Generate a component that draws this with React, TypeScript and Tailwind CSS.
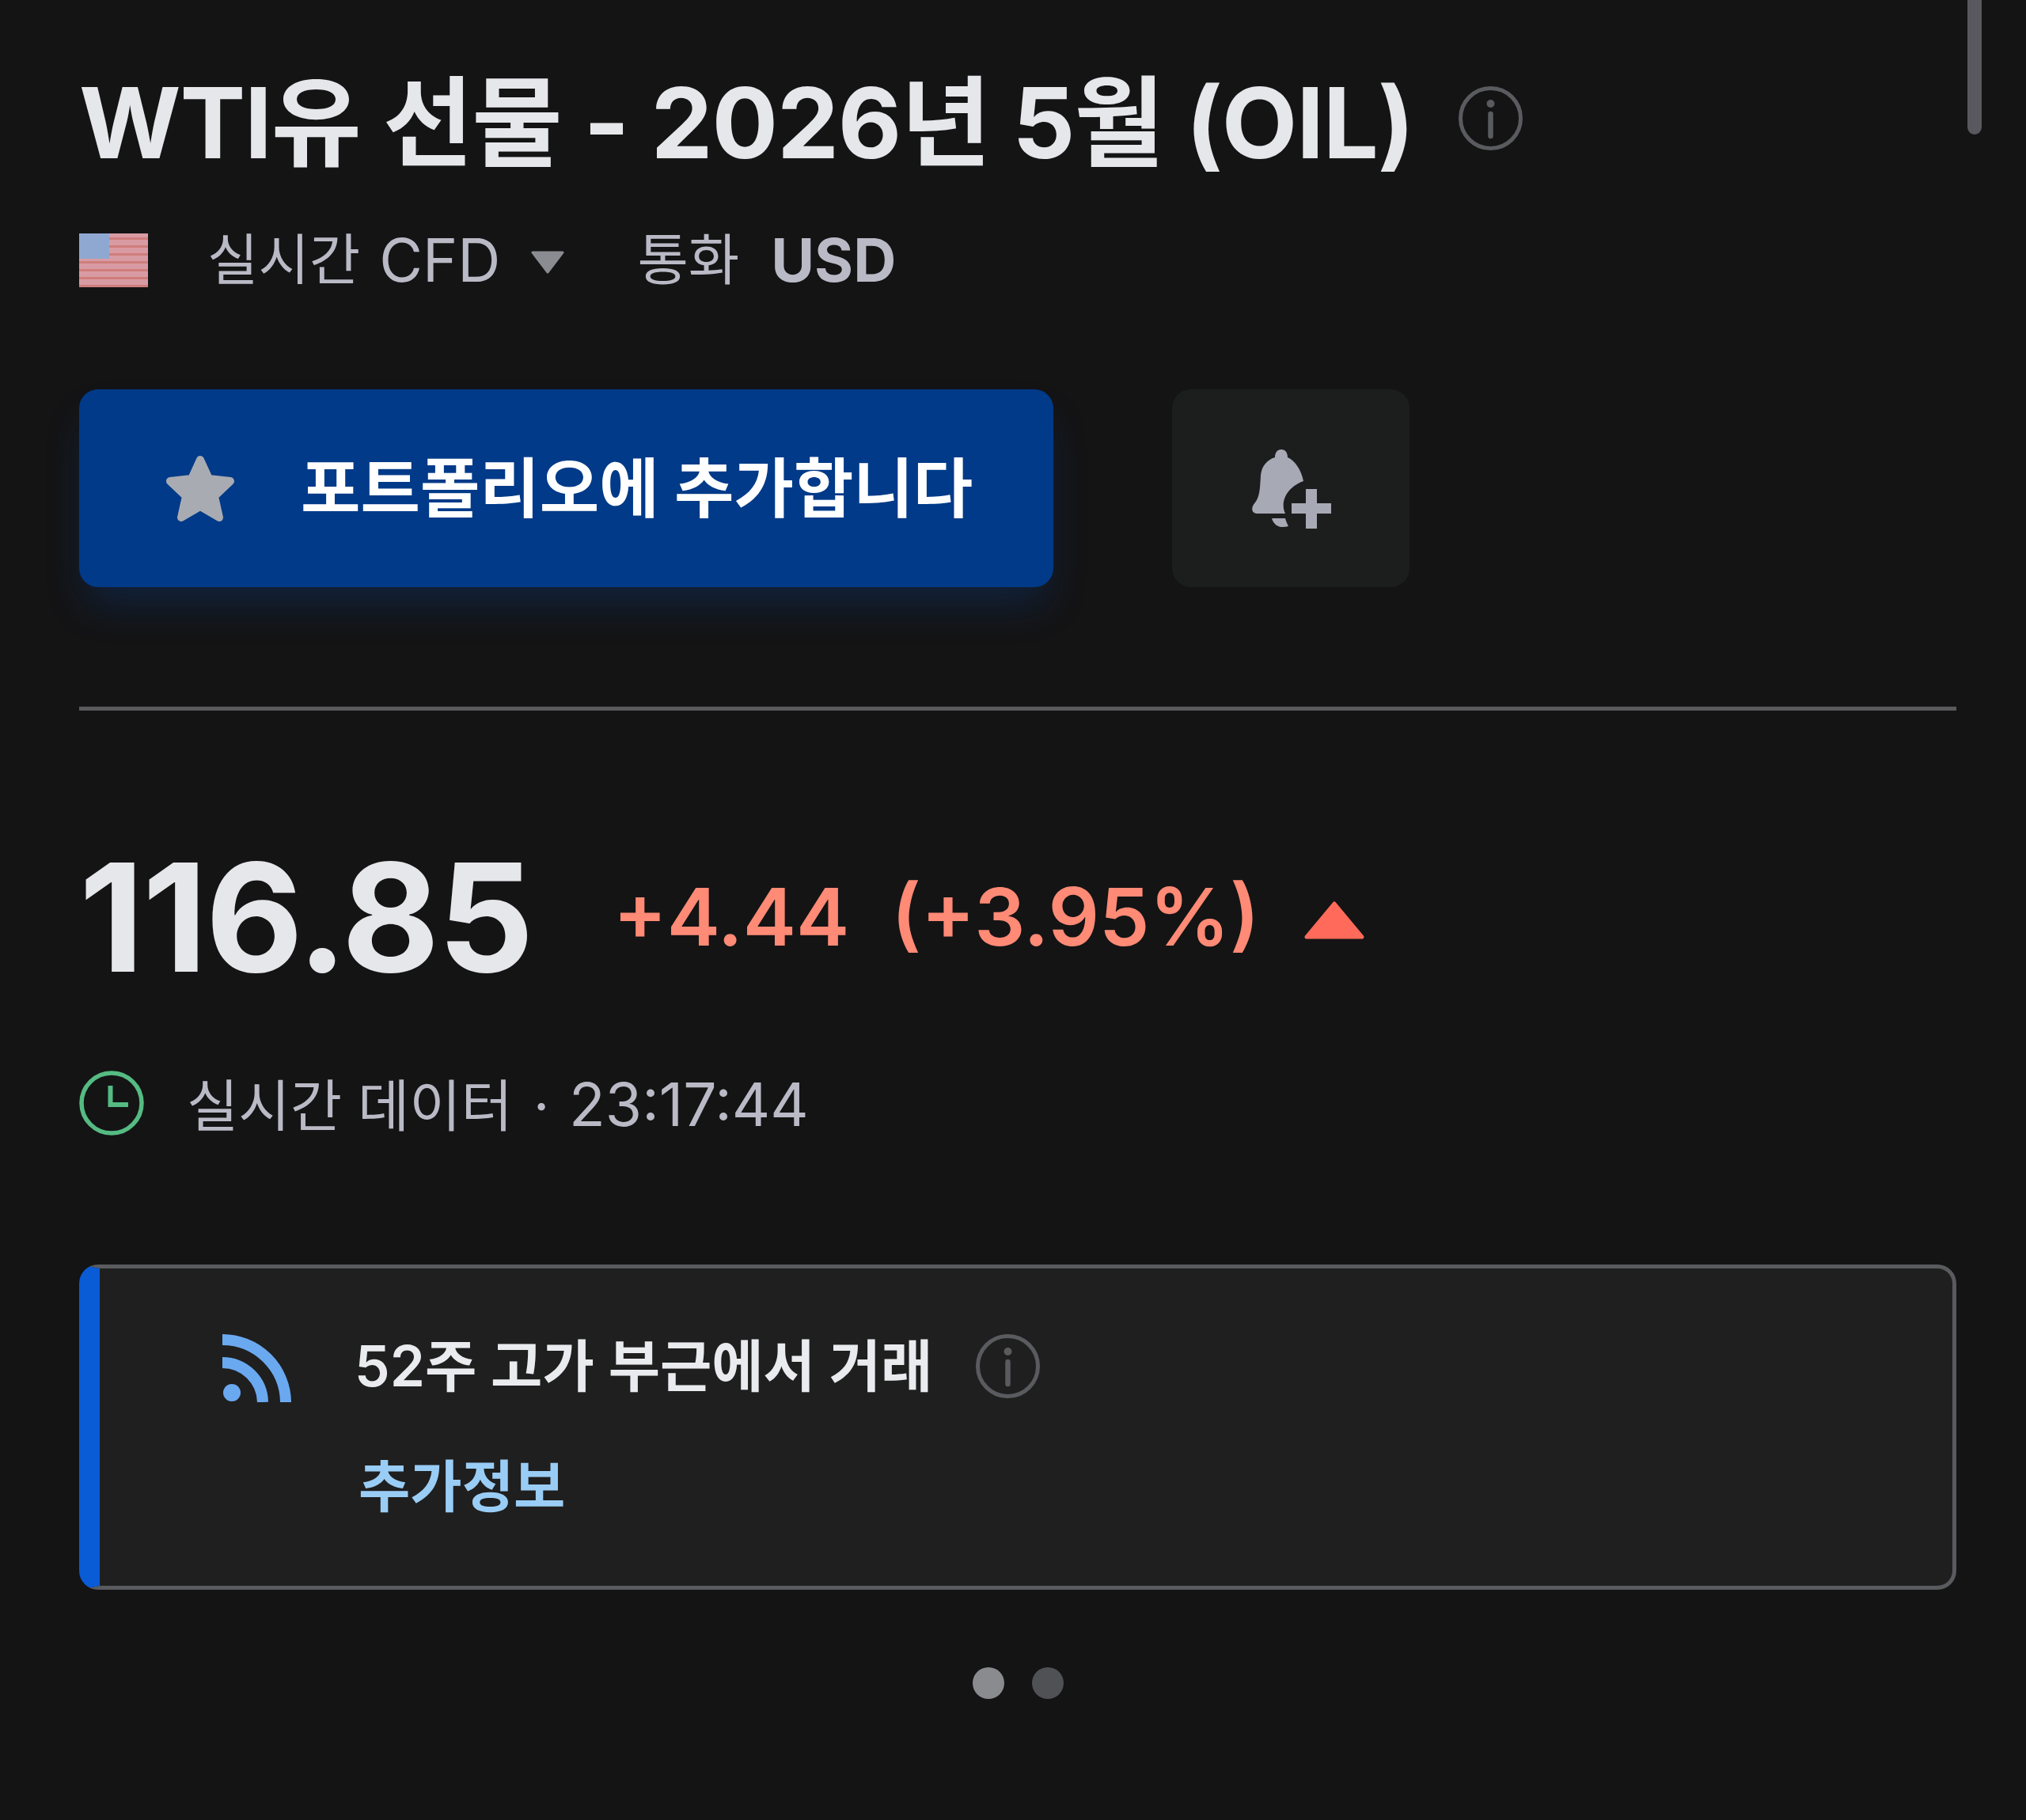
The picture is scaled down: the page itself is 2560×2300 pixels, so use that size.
const InfoIcon = ({ className }: { className: string }) => (
  <svg viewBox="0 0 81 81" className={className} fill="none">
    <circle cx="40.5" cy="40.5" r="38" stroke="#5a5b5f" strokeWidth="5" />
    <circle cx="40.5" cy="22" r="5" fill="#5a5b5f" />
    <path d="M40.5 35v28" stroke="#5a5b5f" strokeWidth="6.5" strokeLinecap="round" />
  </svg>
);

const UsFlag = () => (
  <svg viewBox="0 0 87 68" className="h-[68px] w-[87px] shrink-0">
    <rect width="87" height="68" fill="#d99ba3" />
    {[5, 15, 25, 35, 45, 55, 65].map((y) => (
      <rect key={y} y={y} width="87" height="3" fill="#cf7d7c" />
    ))}
    <rect width="38" height="32" fill="#8ea8d2" />
  </svg>
);

const StarIcon = () => (
  <svg viewBox="0 0 90 87" className="h-[87px] w-[90px] shrink-0">
    <polygon
      points="45,7 56,31 83,34 63,53 69,80 45,66 21,80 27,53 7,34 34,31"
      fill="#a9abb2"
      stroke="#a9abb2"
      strokeWidth="10"
      strokeLinejoin="round"
    />
  </svg>
);

const BellPlusIcon = () => (
  <svg viewBox="0 0 101 101" className="h-[101px] w-[101px]" fill="#a7a9b4">
    <path d="M38 1C33 1 30 5 30 11C20 14 13 22 12 34C11 50 11 60 5 68C0 73-1 82 8 82L43 82C37 70 42 50 66 41C63 26 55 15 46 11C46 5 43 1 38 1Z" />
    <path d="M26 88L43 88C44 92 46 96 47 98C37 101 29 98 26 88Z" />
    <path d="M69 51H83V69H101V82H83V101H69V82H51V69H69Z" />
  </svg>
);

const ClockIcon = () => (
  <svg viewBox="0 0 82 82" className="h-[82px] w-[82px] shrink-0" fill="none" stroke="#55bb82">
    <circle cx="41" cy="41" r="38" strokeWidth="5.5" />
    <path d="M39.5 19V43H62" strokeWidth="6" />
  </svg>
);

const FeedIcon = () => (
  <svg viewBox="0 0 87 86" className="h-[86px] w-[87px] shrink-0" fill="none" stroke="#6aa9f0">
    <circle cx="12" cy="74" r="11" fill="#6aa9f0" stroke="none" />
    <path d="M0 7A80 80 0 0 1 80 86" strokeWidth="14" />
    <path d="M0 36A51 51 0 0 1 51 86" strokeWidth="14" />
  </svg>
);

export default function App() {
  return (
    <div className="relative h-[2300px] w-[2560px] overflow-hidden bg-[#141415] pl-[100px] pr-[88px] pt-[80px] font-[Inter,'Noto_Sans_CJK_KR',sans-serif]">
      {/* scrollbar */}
      <div className="absolute right-[56px] top-0 h-[170px] w-[18px] rounded-b-full bg-[#58585e]" />

      {/* Title */}
      <div className="flex items-center">
        <h1 className="text-[124px] font-bold leading-[150px] tracking-[-1.2px] text-[#e6e7ea]">
          WTI유 선물 - 2026년 5월 (OIL)
        </h1>
        <InfoIcon className="mb-[12px] ml-[57px] h-[81px] w-[81px] shrink-0" />
      </div>

      {/* Market row */}
      <div className="mt-[59px] flex h-[80px] items-center leading-[80px] text-[#b9bac5]">
        <UsFlag />
        <span className="ml-[75px] text-[70px]">실시간</span>
        <span className="ml-[24px] text-[75px]">CFD</span>
        <svg viewBox="0 0 44 30" className="ml-[38px] mt-[4px] h-[30px] w-[44px]">
          <path d="M3 3H41L22 28Z" fill="#8b8c91" stroke="#8b8c91" strokeWidth="3" strokeLinejoin="round" />
        </svg>
        <span className="ml-[91px] text-[70px]">통화</span>
        <span className="ml-[40px] text-[75px] font-bold">USD</span>
      </div>

      {/* Actions */}
      <div className="mt-[123px] flex gap-[150px]">
        <button className="flex h-[250px] w-[1231px] items-center rounded-[24px] bg-[#003a88] pl-[108px] shadow-[0_30px_50px_-10px_rgba(10,70,160,0.3)]">
          <StarIcon />
          <span className="ml-[82px] text-[82px] font-bold text-white">포트폴리오에 추가합니다</span>
        </button>
        <button className="flex h-[250px] w-[300px] items-center justify-center rounded-[24px] bg-[#1c1e1e]">
          <BellPlusIcon />
        </button>
      </div>

      <div className="mt-[151px] h-[5px] bg-[#5a5a5c]" />

      {/* Price */}
      <div className="mt-[161px] flex h-[200px] items-center">
        <span className="text-[190px] font-bold leading-[200px] tracking-[-2px] text-[#e6e7ea]">116.85</span>
        <span className="ml-[102px] text-[101px] font-semibold text-[#ff8a75]">+4.44</span>
        <span className="ml-[53px] text-[101px] font-semibold text-[#ff8a75]">(+3.95%)</span>
        <svg viewBox="0 0 78 50" className="ml-[55px] mt-[8px] h-[50px] w-[78px]">
          <path d="M39 4L74 46H4Z" fill="#ff6a5a" stroke="#ff6a5a" strokeWidth="5" strokeLinejoin="round" />
        </svg>
      </div>

      {/* Data status */}
      <div className="mt-[94px] flex h-[82px] items-center text-[#b9bac5]">
        <ClockIcon />
        <span className="ml-[54px] mt-[5px] flex items-baseline">
          <span className="text-[71px]">실시간 데이터</span>
          <span className="ml-[26px] text-[70px]">·</span>
          <span className="ml-[25px] text-[75px]">23:17:44</span>
        </span>
      </div>

      {/* Notice */}
      <div className="mt-[163px] flex h-[411px] rounded-[24px] border-[5px] border-l-[26px] border-[#5a5b5e] border-l-[#0a5bd6] bg-[#1f1f1f] pl-[155px] pt-[83px]">
        <FeedIcon />
        <div className="ml-[80px]">
          <div className="flex h-[81px] items-center">
            <span className="text-[71px] font-semibold text-[#e9ebee]">52주 고가 부근에서 거래</span>
            <InfoIcon className="ml-[55px] h-[81px] w-[81px] shrink-0" />
          </div>
          <div className="ml-[5px] mt-[71px] text-[71px] font-semibold leading-[80px] text-[#9acdf5]">추가정보</div>
        </div>
      </div>

      {/* Pager */}
      <div className="mt-[98px] flex justify-center gap-[35px]">
        <span className="h-[40px] w-[40px] rounded-full bg-[#8a8b8e]" />
        <span className="h-[40px] w-[40px] rounded-full bg-[#505155]" />
      </div>
    </div>
  );
}
